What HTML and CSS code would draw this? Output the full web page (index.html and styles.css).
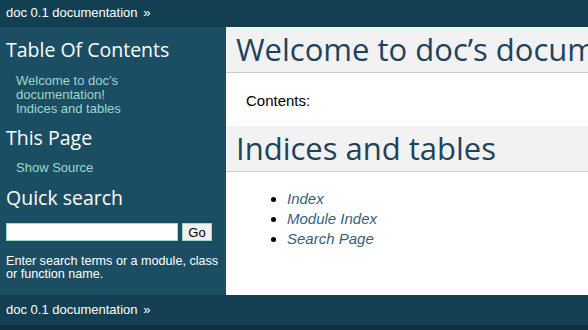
FILE: index.html
```html
<!DOCTYPE html>
<html lang="en">
<head>
    <meta charset="UTF-8">
    <title>Welcome to doc’s documentation! — doc 0.1 documentation</title>
    <link rel="stylesheet" href="styles.css">
</head>
<body>
    <div class="related">
        <a href="#">doc 0.1 documentation</a> <span class="sep">»</span>
    </div>
    <div class="document">
        <div class="sidebar">
            <h3>Table Of Contents</h3>
            <ul class="toc">
                <li><a href="#">Welcome to doc’s documentation!</a></li>
                <li><a href="#">Indices and tables</a></li>
            </ul>
            <h3>This Page</h3>
            <ul class="toc">
                <li><a href="#">Show Source</a></li>
            </ul>
            <h3>Quick search</h3>
            <form class="search">
                <input type="text" class="search-input">
                <button type="button" class="search-go">Go</button>
            </form>
            <p class="searchtip">Enter search terms or a module, class or function name.</p>
        </div>
        <div class="body">
            <h1>Welcome to doc’s documentation!</h1>
            <p class="contents">Contents:</p>
            <h1>Indices and tables</h1>
            <ul class="indices">
                <li><a href="#">Index</a></li>
                <li><a href="#">Module Index</a></li>
                <li><a href="#">Search Page</a></li>
            </ul>
        </div>
    </div>
    <div class="related bottom">
        <a href="#">doc 0.1 documentation</a> <span class="sep">»</span>
    </div>
    <div class="footer"></div>
</body>
</html>
```
FILE: styles.css
```css
body {
    margin: 0;
    font-family: 'Liberation Sans', Arial, sans-serif;
    font-size: 13px;
    background-color: #11303d; /* footer colour shows below the last bar */
    overflow: hidden;
}

a {
    text-decoration: none;
}

.related {
    background-color: #133f52;
    color: #ffffff;
    height: 27px;
    line-height: 25px;
    padding-left: 6px;
    white-space: nowrap;
}

.related a {
    color: #ffffff;
}

.related .sep {
    margin-left: 2px;
}

.related.bottom {
    height: 30px;
    line-height: 30px;
}

.document {
    display: flex;
    height: 268px;
}

.sidebar {
    width: 226px;
    flex-shrink: 0;
    box-sizing: border-box;
    background-color: #1c4e63;
    padding: 11px 1px 0 6px;
    color: #ffffff;
}

.sidebar h3 {
    font-family: 'Open Sans', sans-serif;
    font-size: 19.5px;
    font-weight: normal;
    line-height: 24px;
    margin: 0;
}

.toc {
    list-style: none;
    margin: 12px 30px 10px 0;
    padding-left: 10px;
    line-height: 14px;
}

.toc a {
    color: #98dbcc;
}

.sidebar ul.toc:nth-of-type(2) {
    margin: 11px 30px 11px 0;
}

.search {
    display: flex;
    gap: 4px;
    margin: 13px 0 0;
}

.search-input {
    width: 172px;
    height: 18px;
    box-sizing: border-box;
    border: 1px solid #98dbcc;
    padding: 0 2px;
    margin: 0;
}

.search-go {
    width: 30px;
    height: 18px;
    box-sizing: border-box;
    border: 1px solid #98dbcc;
    background-color: #f0f0f0;
    font-family: 'Liberation Sans', Arial, sans-serif;
    font-size: 13px;
    padding: 0;
    margin: 0;
    color: #000000;
}

.searchtip {
    font-size: 12.6px;
    line-height: 13px;
    margin: 14px 0 0;
}

.body {
    flex: 1;
    background-color: #ffffff;
    padding: 0 20px;
    min-width: 0;
    overflow: hidden;
}

.body h1 {
    font-family: 'Open Sans', sans-serif;
    font-size: 31px;
    font-weight: normal;
    line-height: 39px;
    color: #20435c;
    background-color: #f2f2f2;
    border-bottom: 1px solid #cccccc;
    margin: 0 -20px;
    padding: 3px 0 3px 10px;
    white-space: nowrap;
}

.contents {
    font-size: 15px;
    line-height: 20px;
    margin: 18px 0 15px;
}

.indices {
    font-size: 15px;
    line-height: 20px;
    margin: 17px 0 0;
    padding-left: 41px;
}

.indices a {
    color: #355f7c;
    font-style: italic;
}
```
